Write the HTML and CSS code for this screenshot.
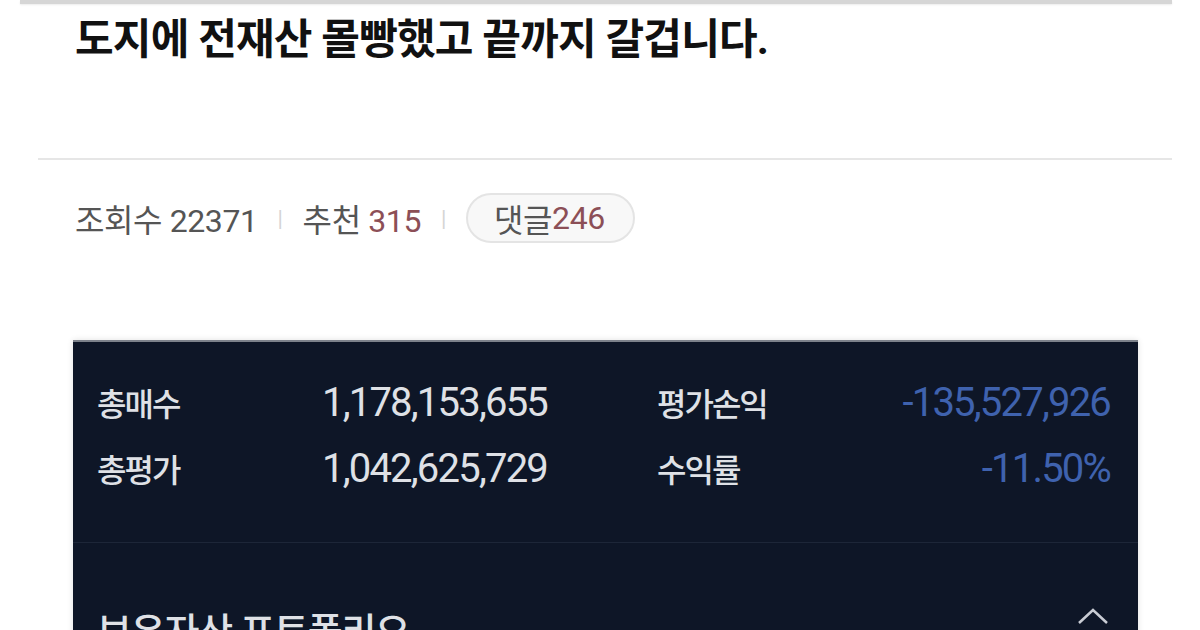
FILE: index.html
```html
<!DOCTYPE html>
<html lang="ko">
<head>
    <meta charset="UTF-8">
    <meta name="viewport" content="width=device-width, initial-scale=1.0">
    <title>도지에 전재산 몰빵했고 끝까지 갈겁니다.</title>
    <link rel="stylesheet" href="styles.css">
</head>
<body>
    <div class="top-rule"></div>

    <header class="post-head">
        <h1>도지에 전재산 몰빵했고 끝까지 갈겁니다.</h1>
        <div class="post-meta"></div>
    </header>

    <div class="rule"></div>

    <div class="stats">
        <span class="stat">조회수 <b>22371</b></span>
        <span class="sep">|</span>
        <span class="stat">추천 <b class="hot">315</b></span>
        <span class="sep">|</span>
        <span class="stat pill">댓글<b class="hot">246</b></span>
    </div>

    <section class="card">
        <div class="summary">
            <span class="label">총매수</span>
            <span class="value">1,178,153,655</span>
            <span class="label">평가손익</span>
            <span class="value loss">-135,527,926</span>

            <span class="label">총평가</span>
            <span class="value">1,042,625,729</span>
            <span class="label">수익률</span>
            <span class="value loss">-11.50%</span>
        </div>
        <div class="portfolio">
            <h2>보유자산 포트폴리오</h2>
            <svg class="chevron" width="34" height="20" viewBox="0 0 34 20">
                <path d="M3 18 L17 5 L31 18" fill="none" stroke="#c9ccd4" stroke-width="2.5"/>
            </svg>
        </div>
    </section>
</body>
</html>
```

FILE: styles.css
```css
:root {
    --text-color: #111;
    --muted: #555;
    --hot: #8c4f57;
    --card-bg: #0e1627;
    --card-text: #dfe1e6;
    --loss: #3f62ae;
}
* {
    box-sizing: border-box;
}
body {
    margin: 0;
    background: white;
    color: var(--text-color);
    font-family: Roboto, "Noto Sans CJK KR", sans-serif;
    overflow: hidden;
}
.top-rule {
    height: 4px;
    margin: 0 28px 0 20px;
    background: #d6d6d6;
    box-shadow: 0 1px 2px rgba(0, 0, 0, 0.08);
}
.post-head {
    padding-left: 75px;
}
.post-head h1 {
    margin: 11px 0 0;
    font-size: 42px;
    line-height: 50px;
    font-weight: 700;
    letter-spacing: -0.8px;
}
.post-meta {
    height: 93px;
}
.rule {
    height: 2px;
    margin: 0 28px 0 38px;
    background: #e6e6e6;
}
.stats {
    display: flex;
    align-items: center;
    gap: 20px;
    margin-top: 33px;
    padding-left: 75px;
    font-size: 32px;
    color: var(--muted);
    letter-spacing: -0.4px;
}
.stat b {
    font-weight: 400;
}
.stat .hot {
    color: var(--hot);
}
.sep {
    font-size: 22px;
    color: #d4d4d4;
}
.pill {
    height: 50px;
    display: inline-flex;
    align-items: center;
    padding: 0 28px 0 26px;
    border: 2px solid #e4e4e4;
    border-radius: 25px;
    background: #f8f8f8;
}
.card {
    margin: 97px 0 0 73px;
    width: 1065px;
    height: 400px;
    background: var(--card-bg);
    border-top: 2px solid #7d828b;
    box-shadow: 0 0 6px rgba(0, 0, 0, 0.12);
    color: var(--card-text);
}
.summary {
    display: grid;
    grid-template-columns: 225px 335px 1fr auto;
    grid-auto-rows: 44px;
    row-gap: 22px;
    align-items: center;
    padding: 38px 28px 52px 24px;
    border-bottom: 1px solid #1d2638;
}
.label {
    font-size: 32px;
    font-weight: 500;
    letter-spacing: -2px;
}
.value {
    font-size: 40px;
    letter-spacing: -1.8px;
}
.value.loss {
    color: var(--loss);
    text-align: right;
}
.portfolio {
    display: flex;
    justify-content: space-between;
    align-items: flex-start;
    padding: 58px 28px 0 24px;
}
.portfolio h2 {
    margin: 0;
    font-size: 38px;
    font-weight: 500;
    letter-spacing: -1.2px;
}
.chevron {
    margin-top: 4px;
}
```
